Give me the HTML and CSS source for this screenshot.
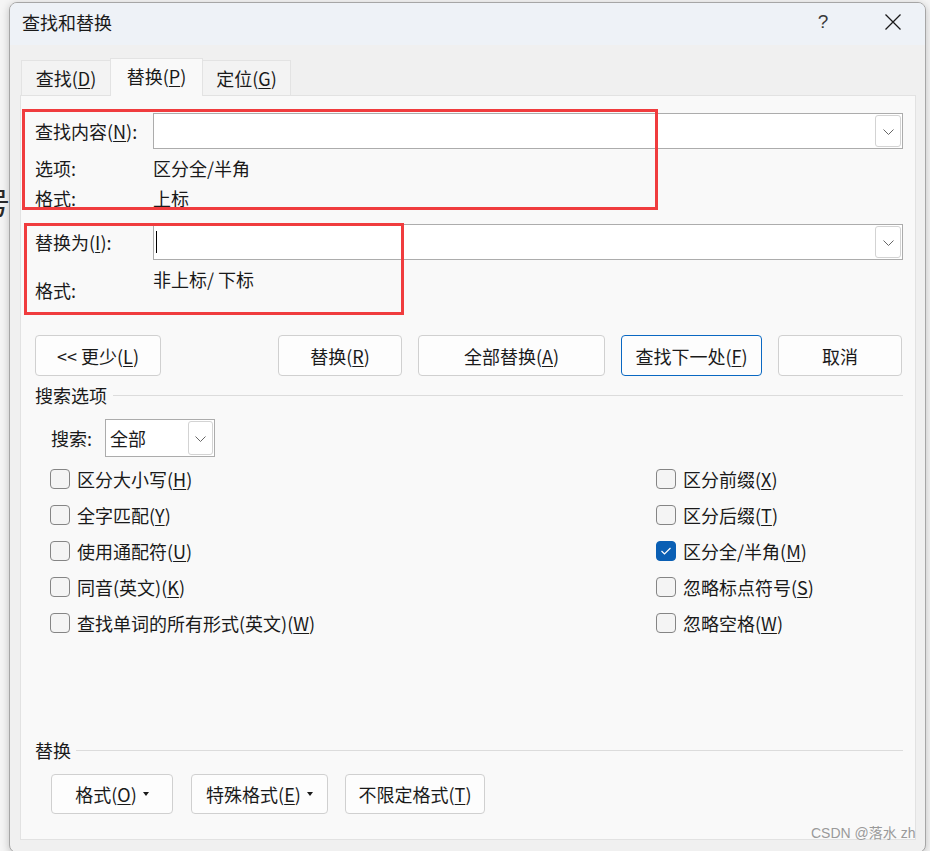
FILE: index.html
```html
<!DOCTYPE html>
<html lang="zh-CN">
<head>
<meta charset="utf-8">
<title>查找和替换</title>
<link rel="stylesheet" href="styles.css">
</head>
<body>
<div class="doc"><span class="doc-char">号</span></div>

<div class="window">
  <div class="titlebar">
    <span class="title">查找和替换</span>
    <span class="help">?</span>
    <span class="close">
      <svg width="16" height="16" viewBox="0 0 16 16"><path d="M0.5 0.5 L15.5 15.5 M15.5 0.5 L0.5 15.5" stroke="#1a1a1a" stroke-width="1.3" fill="none"/></svg>
    </span>
  </div>

  <div class="client">
    <div class="tabs">
      <div class="tab tab-find"><span>查找(<u>D</u>)</span></div>
      <div class="tab tab-replace active"><span>替换(<u>P</u>)</span></div>
      <div class="tab tab-goto"><span>定位(<u>G</u>)</span></div>
    </div>

    <div class="panel">
      <div class="field-row">
        <span class="label">查找内容(<u>N</u>):</span>
        <div class="combo">
          <span class="combo-text"></span>
          <span class="drop-btn"><svg width="11" height="6" viewBox="0 0 11 6"><path d="M0.5 0.5 L5.5 5.5 L10.5 0.5" stroke="#666" stroke-width="1" fill="none"/></svg></span>
        </div>
      </div>
      <div class="info-row first"><span class="label">选项:</span><span class="value">区分全/半角</span></div>
      <div class="info-row"><span class="label">格式:</span><span class="value">上标</span></div>

      <div class="field-row replace-row">
        <span class="label">替换为(<u>I</u>):</span>
        <div class="combo">
          <span class="combo-text"><span class="caret"></span></span>
          <span class="drop-btn"><svg width="11" height="6" viewBox="0 0 11 6"><path d="M0.5 0.5 L5.5 5.5 L10.5 0.5" stroke="#666" stroke-width="1" fill="none"/></svg></span>
        </div>
      </div>
      <div class="format-row"><span class="label">格式:</span><span class="value">非上标/ 下标</span></div>

      <div class="button-row">
        <button class="btn btn-less"><span>&lt;&lt; 更少(<u>L</u>)</span></button>
        <div class="btn-group">
          <button class="btn btn-replace"><span>替换(<u>R</u>)</span></button>
          <button class="btn btn-all"><span>全部替换(<u>A</u>)</span></button>
          <button class="btn btn-next default"><span>查找下一处(<u>F</u>)</span></button>
          <button class="btn btn-cancel"><span>取消</span></button>
        </div>
      </div>

      <div class="section-head">搜索选项</div>

      <div class="search-row">
        <span class="search-label">搜索:</span>
        <div class="select">
          <span class="select-text">全部</span>
          <span class="drop-btn small"><svg width="11" height="6" viewBox="0 0 11 6"><path d="M0.5 0.5 L5.5 5.5 L10.5 0.5" stroke="#666" stroke-width="1" fill="none"/></svg></span>
        </div>
      </div>

      <div class="options">
        <div class="opt"><span class="box"></span><span class="opt-text">区分大小写(<u>H</u>)</span></div>
        <div class="opt"><span class="box"></span><span class="opt-text">全字匹配(<u>Y</u>)</span></div>
        <div class="opt"><span class="box"></span><span class="opt-text">使用通配符(<u>U</u>)</span></div>
        <div class="opt"><span class="box"></span><span class="opt-text">同音(英文)(<u>K</u>)</span></div>
        <div class="opt"><span class="box"></span><span class="opt-text">查找单词的所有形式(英文)(<u>W</u>)</span></div>
        <div class="opt"><span class="box"></span><span class="opt-text">区分前缀(<u>X</u>)</span></div>
        <div class="opt"><span class="box"></span><span class="opt-text">区分后缀(<u>T</u>)</span></div>
        <div class="opt"><span class="box checked"><svg width="20" height="20" viewBox="0 0 20 20"><path d="M5.5 10 L8.5 13 L14.5 7" stroke="#fff" stroke-width="1.2" fill="none"/></svg></span><span class="opt-text">区分全/半角(<u>M</u>)</span></div>
        <div class="opt"><span class="box"></span><span class="opt-text">忽略标点符号(<u>S</u>)</span></div>
        <div class="opt"><span class="box"></span><span class="opt-text">忽略空格(<u>W</u>)</span></div>
      </div>

      <div class="section-head replace-head">替换</div>

      <div class="bottom-row">
        <button class="btn btn-format"><span>格式(<u>O</u>)</span><span class="tri"></span></button>
        <button class="btn btn-special"><span>特殊格式(<u>E</u>)</span><span class="tri"></span></button>
        <button class="btn btn-noformat"><span>不限定格式(<u>T</u>)</span></button>
      </div>
    </div>
  </div>
</div>

<div class="annot annot-find"></div>
<div class="annot annot-replace"></div>
<div class="watermark">CSDN @落水 zh</div>
</body>
</html>
```

FILE: styles.css
```css
* { box-sizing: border-box; }

html, body {
  margin: 0;
  padding: 0;
}

body {
  width: 930px;
  height: 851px;
  overflow: hidden;
  position: relative;
  background: #f5f5f5;
  font-family: "Noto Sans CJK SC", "Noto Sans", sans-serif;
  color: #1a1a1a;
}

.doc {
  padding-top: 184px;
  margin-left: -20px;
  font-size: 30px;
  line-height: 34px;
  color: #2a2a2a;
}

.window {
  position: absolute;
  left: 9px;
  top: 2px;
  width: 917px;
  height: 851px;
  border: 1px solid #a6a6a6;
  border-radius: 8px;
  background: #f0f0f0;
  box-shadow: 0 2px 8px rgba(0, 0, 0, 0.22);
  overflow: hidden;
  display: flex;
  flex-direction: column;
}

.titlebar {
  height: 42px;
  flex: none;
  background: #eef2f7;
  display: flex;
  align-items: center;
  padding: 0 24px 4px 12px;
}

.title {
  flex: 1;
  font-size: 18px;
  line-height: 24px;
}

.help {
  width: 20px;
  text-align: center;
  font-family: "Liberation Sans", "DejaVu Sans", sans-serif;
  font-size: 19px;
  color: #3a3a3a;
  line-height: 24px;
}

.close {
  margin-left: 52px;
  width: 16px;
  height: 16px;
  display: flex;
}

.client {
  flex: 1;
  padding: 0 9px 0 10px;
  display: flex;
  flex-direction: column;
}

.tabs {
  height: 51px;
  flex: none;
  display: flex;
  align-items: flex-end;
  padding-left: 1px;
  margin-bottom: -1px;
  font-size: 18px;
}

.tab {
  height: 36px;
  display: flex;
  align-items: center;
  justify-content: center;
  background: #f3f3f3;
  border: 1px solid #e3e3e3;
  border-bottom: none;
  padding-bottom: 1px;
}

.tab-find { width: 89px; border-right: none; }
.tab-replace { width: 93px; }
.tab-goto { width: 88px; border-left: none; }

.tab.active {
  height: 38px;
  background: #f9f9f9;
  position: relative;
  z-index: 1;
  padding-bottom: 3px;
}

u { text-decoration-thickness: 1px; text-underline-offset: 2px; }

.panel {
  height: 745px;
  flex: none;
  background: #f9f9f9;
  border: 1px solid #e2e2e2;
  padding: 17px 12px 0 14px;
  font-size: 18px;
}

.label, .value {
  line-height: 30px;
}

.field-row {
  display: grid;
  grid-template-columns: 118px 1fr;
  align-items: center;
  height: 36px;
}

.combo {
  height: 36px;
  background: #fff;
  border: 1px solid #acacac;
  padding: 1px 1px 1px 0;
  display: flex;
}

.combo-text {
  flex: 1;
  display: flex;
  align-items: center;
}

.caret {
  display: block;
  width: 1px;
  height: 22px;
  margin-left: 2px;
  background: #000;
}

.drop-btn {
  width: 26px;
  height: 32px;
  background: #fff;
  border: 1px solid #d3d3d3;
  border-radius: 3px;
  display: flex;
  align-items: center;
  justify-content: center;
  padding-top: 2px;
}

.drop-btn.small {
  width: 25px;
  height: 34px;
}

.info-row {
  display: grid;
  grid-template-columns: 118px 1fr;
}

.info-row.first { margin-top: 4px; }

.replace-row { margin-top: 11px; }

.format-row {
  display: grid;
  grid-template-columns: 118px 1fr;
  align-items: start;
}

.format-row .label { margin-top: 15px; }
.format-row .value { margin-top: 4px; }

.button-row {
  margin-top: 30px;
  display: flex;
  height: 41px;
}

.btn {
  height: 41px;
  background: #fdfdfd;
  border: 1px solid #d0d0d0;
  border-radius: 4px;
  font-family: inherit;
  font-size: 18px;
  color: #1a1a1a;
  padding: 0;
  display: flex;
  align-items: center;
  justify-content: center;
}

.btn.default { border-color: #0a68c2; }

.btn-less { width: 126px; }
.btn-replace { width: 124px; }
.btn-all { width: 187px; }
.btn-next { width: 141px; }
.btn-cancel { width: 124px; }

.btn-group {
  margin-left: auto;
  margin-right: 1px;
  display: flex;
  gap: 16px;
}

.section-head {
  margin-top: 4px;
  display: flex;
  align-items: center;
  line-height: 30px;
}

.section-head::after {
  content: "";
  flex: 1;
  height: 1px;
  background: #dcdcdc;
  margin-left: 6px;
}

.search-row {
  margin-top: 9px;
  height: 38px;
  padding-left: 16px;
  display: flex;
  align-items: center;
}

.search-label {
  width: 54px;
}

.select {
  width: 110px;
  height: 38px;
  background: #fff;
  border: 1px solid #acacac;
  padding: 1px 1px 1px 4px;
  display: flex;
  align-items: center;
}

.select-text { flex: 1; }

.options {
  margin-top: 4px;
  padding-left: 15px;
  display: grid;
  grid-template-columns: 606px 1fr;
  grid-template-rows: repeat(5, 36px);
  grid-auto-flow: column;
}

.opt {
  display: flex;
  align-items: center;
  gap: 7px;
}

.box {
  width: 20px;
  height: 20px;
  flex: none;
  border: 1px solid #858585;
  border-radius: 4px;
  background: #f4f4f4;
  display: flex;
}

.box.checked {
  background: #0a5fb4;
  border-color: #0a5fb4;
}

.box.checked svg { margin: -1px; }

.replace-head { margin-top: 94px; }

.section-head.replace-head::after { margin-left: 5px; }

.bottom-row {
  margin-top: 9px;
  padding-left: 16px;
  display: flex;
  gap: 17px;
}

.bottom-row .btn { height: 40px; }

.btn-format { width: 122px; margin-right: 1px; }
.btn-special { width: 137px; }
.btn-noformat { width: 140px; }

.tri {
  width: 0;
  height: 0;
  margin-left: 6px;
  border-left: 3px solid transparent;
  border-right: 3px solid transparent;
  border-top: 4px solid #1a1a1a;
}

.annot {
  position: absolute;
  border: 3px solid #f03c3e;
}

.annot-find {
  left: 22px;
  top: 109px;
  width: 636px;
  height: 101px;
}

.annot-replace {
  left: 24px;
  top: 223px;
  width: 380px;
  height: 92px;
}

.watermark {
  position: absolute;
  left: 811px;
  top: 825px;
  font-family: "Liberation Sans", "Noto Sans CJK SC", sans-serif;
  font-size: 14px;
  line-height: 16px;
  color: #9a9a9a;
}
```
